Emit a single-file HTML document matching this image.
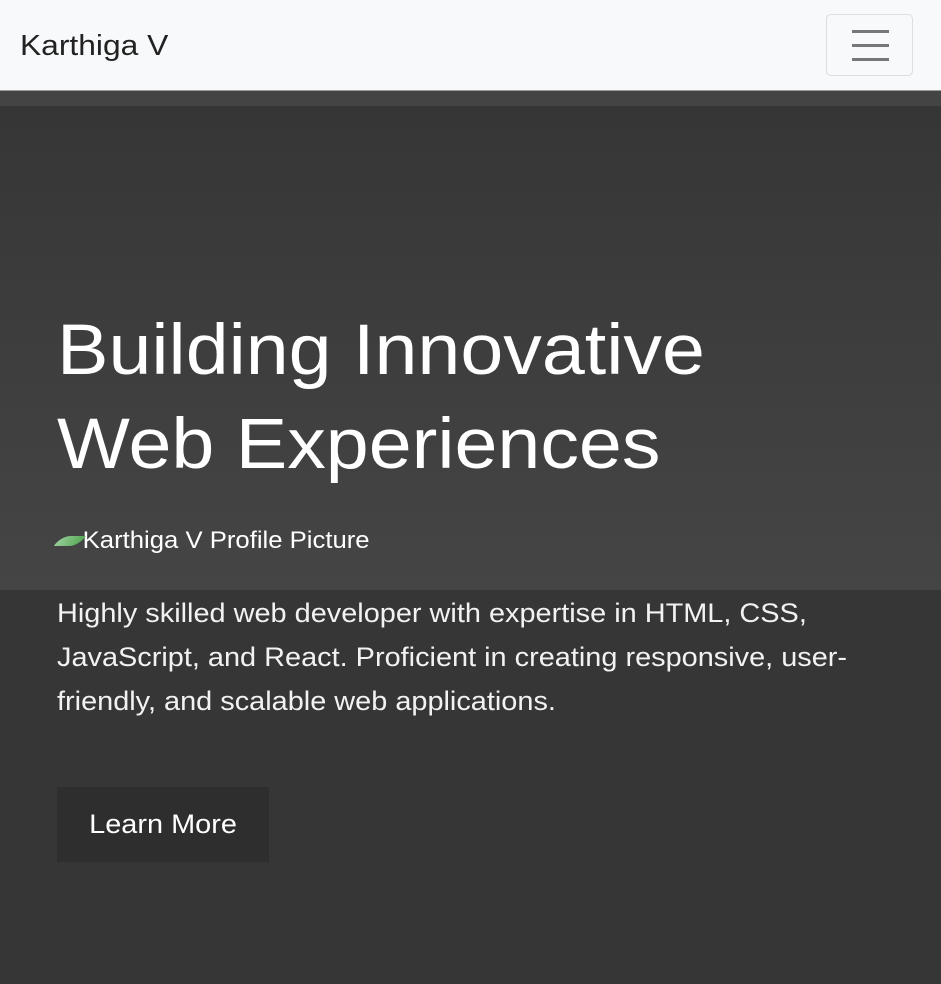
<!DOCTYPE html>
<html><head><style>
body{margin:0;width:941px;height:984px;overflow:hidden;background:#363636;font-family:"Liberation Sans",sans-serif;position:relative}
.nav{position:absolute;top:0;left:0;width:941px;height:90px;background:#f8f9fa;border-bottom:1px solid #9a9a9a}
.brand{position:absolute;left:20px;top:30px;font-size:29px;color:#222;transform:scaleX(1.095);transform-origin:left}
.tog{position:absolute;left:826px;top:14px;width:87px;height:62px;border:1px solid #ddd;border-radius:5px;box-sizing:border-box}
.tog i{position:absolute;left:25px;width:37px;height:3px;background:#777}
.band{position:absolute;top:91px;left:0;width:941px;height:15px;background:#444}
.hero{position:absolute;top:106px;left:0;width:941px;height:484px;background:linear-gradient(#363636,#454545)}
h1{position:absolute;left:57px;top:304px;margin:0;font-weight:normal;font-size:71px;line-height:94px;color:#fff;transform:scaleX(1.087);transform-origin:left}
.pic{position:absolute;left:57px;top:527px;font-size:24px;color:#fff;transform:scaleX(1.07);transform-origin:left}
.pic b{display:inline-block;width:24px;height:10px;background:linear-gradient(90deg,#9c9,#5a5);border-radius:10px 0 10px 0;transform:skewX(-30deg);vertical-align:2px}
p{position:absolute;left:57px;top:591px;margin:0;font-size:27px;line-height:44px;color:#f2f2f2;transform:scaleX(1.07);transform-origin:left;white-space:nowrap}
.btn{position:absolute;left:57px;top:787px;width:212px;height:75px;background:#2e2e2e;color:#fff;font-size:27px;line-height:75px;text-align:center}
.btn span{display:inline-block;transform:scaleX(1.07)}
</style></head><body>
<div class="nav"><div class="brand">Karthiga V</div><div class="tog"><i style="top:15px"></i><i style="top:29px"></i><i style="top:43px"></i></div></div>
<div class="band"></div><div class="hero"></div>
<h1>Building Innovative<br>Web Experiences</h1>
<div class="pic"><b></b>Karthiga V Profile Picture</div>
<p>Highly skilled web developer with expertise in HTML, CSS,<br>JavaScript, and React. Proficient in creating responsive, user-<br>friendly, and scalable web applications.</p>
<div class="btn"><span>Learn More</span></div>
</body></html>
